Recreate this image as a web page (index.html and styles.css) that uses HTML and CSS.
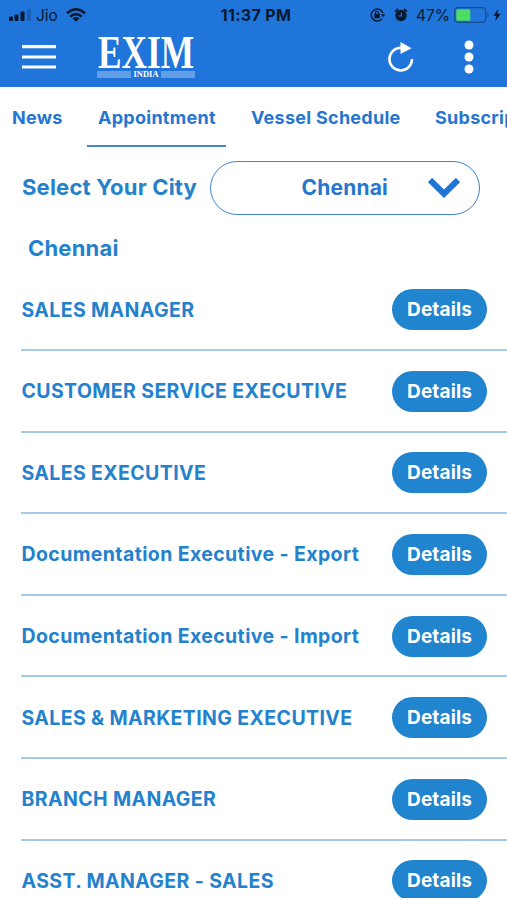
FILE: index.html
```html
<!DOCTYPE html>
<html lang="en">
<head>
<meta charset="utf-8">
<title>EXIM India</title>
<link rel="stylesheet" href="styles.css">
</head>
<body>
<div class="screen">
  <header class="header">
    <div class="status">
      <div class="status-left">
        <svg class="signal" width="23" height="12" viewBox="0 0 23 12"><rect x="0" y="7.500" width="4" height="4.500" rx="1"/><rect x="5.500" y="5.500" width="4" height="6.500" rx="1"/><rect x="11.500" y="2.500" width="4" height="9.500" rx="1"/><rect x="18" y="0" width="4" height="12" rx="1" opacity=".22"/></svg>
        <span class="carrier">Jio</span>
        <svg class="wifi" width="20" height="14" viewBox="0 0 20 14"><g fill="none" stroke="#07192f" stroke-width="2.500"><path d="M1 5.200Q10-2.700 19 5.200"/><path d="M4.200 8.600Q10 3.600 15.800 8.600"/></g><path d="M6.500 10.200Q10 7.600 13.500 10.200L10 13.700Z"/></svg>
      </div>
      <span class="time">11:37 PM</span>
      <div class="status-right">
        <svg class="lock" width="16" height="14" viewBox="0 0 16 14"><path d="M12.900 5A6 6 0 1 0 12 10.600" fill="none" stroke="#07192f" stroke-width="1.400"/><path d="M10.700 6.200h4.600L13 9.200Z"/><rect x="4.300" y="6" width="5.400" height="4.200" rx=".5"/><path d="M5.400 6.500V5a1.600 1.600 0 0 1 3.200 0v1.500" fill="none" stroke="#07192f" stroke-width="1.100"/></svg>
        <svg class="alarm" width="14" height="14" viewBox="0 0 14 14"><circle cx="7" cy="7.500" r="5.700"/><path d="M1 3.600 4 1M10 1l3 2.600" stroke="#07192f" stroke-width="1.900"/><path d="M7.300 4.500V8H4.500" fill="none" stroke="#1f75da" stroke-width="1.200"/></svg>
        <span class="percent">47%</span>
        <svg class="battery" width="36" height="16" viewBox="0 0 36 16"><rect x=".7" y=".7" width="31" height="14.600" rx="3.500" fill="none" stroke="#174c8d" stroke-width="1.300"/><rect x="2.300" y="2.300" width="14" height="11.400" rx="1.500" fill="#4cdb63"/><path d="M33.500 5.500q2.500 2.500 0 5z" fill="#174c8d"/></svg>
        <svg class="bolt" width="8" height="12" viewBox="0 0 8 12"><path d="M5.300 0 .3 6.800h3L2.300 12 7.700 4.800H4.500Z"/></svg>
      </div>
    </div>
    <div class="bar">
      <svg class="menu" width="34" height="26" viewBox="0 0 34 26"><path d="M0 2.700h34M0 13h34M0 23h34" stroke="#fff" stroke-width="3.200"/></svg>
      <div class="logo">
        <svg width="98" height="34" viewBox="0 0 98 34"><text x="1" y="31.500" textLength="96" lengthAdjust="spacingAndGlyphs" class="logo-name">EXIM</text></svg>
        <div class="logo-strip"><i></i><span>INDIA</span><i></i></div>
      </div>
      <svg class="reload" width="26" height="30" viewBox="0 0 26 30"><path d="M15 5.800H12.800A11.300 11.300 0 1 0 24 17" fill="none" stroke="#fff" stroke-width="2.500"/><path d="M12.500 0 23.500 6.300 12.500 12Z" fill="#fff"/></svg>
      <svg class="more" width="10" height="34" viewBox="0 0 10 34"><g fill="#fff"><circle cx="5" cy="5" r="4.500"/><circle cx="5" cy="17" r="4.500"/><circle cx="5" cy="29" r="4.500"/></g></svg>
    </div>
  </header>
  <nav class="tabs">
    <a class="tab news">News</a>
    <a class="tab appointment active">Appointment</a>
    <a class="tab vessel">Vessel Schedule</a>
    <a class="tab">Subscription</a>
  </nav>
  <div class="filter">
    <span class="filter-label">Select Your City</span>
    <div class="select"><span>Chennai</span><svg class="chevron" width="32" height="20" viewBox="0 0 32 20"><path d="M2 2 16 15.700 30 2" fill="none" stroke="#1f75d6" stroke-width="6"/></svg></div>
  </div>
  <h2 class="city">Chennai</h2>
  <ul class="jobs">
    <li><span>SALES MANAGER</span><button>Details</button></li>
    <li><span>CUSTOMER SERVICE EXECUTIVE</span><button>Details</button></li>
    <li><span>SALES EXECUTIVE</span><button>Details</button></li>
    <li><span>Documentation Executive - Export</span><button>Details</button></li>
    <li><span>Documentation Executive - Import</span><button>Details</button></li>
    <li><span>SALES &amp; MARKETING EXECUTIVE</span><button>Details</button></li>
    <li><span>BRANCH MANAGER</span><button>Details</button></li>
    <li><span>ASST. MANAGER - SALES</span><button>Details</button></li>
  </ul>
</div>
</body>
</html>
```
FILE: styles.css
```css
* { box-sizing: border-box; }
body { margin: 0; height: 900px; overflow: hidden; background: #fff; font-family: Inter, "Liberation Sans", sans-serif; font-weight: 660; color: #2482cd; }
svg { display: block; flex: none; }
.screen { width: 507px; height: 898px; overflow: hidden; }
.header { height: 87px; background: #1f75da; color: #07192f; }
.status { height: 30px; display: grid; grid-template-columns: 1fr auto 1fr; align-items: center; padding: 0 6px 0 9px; fill: #07192f; }
.status-left, .status-right { display: flex; align-items: center; }
.status-right { justify-content: flex-end; }
.carrier { font-size: 15.5px; font-weight: 400; margin: 0 8px 0 4px; }
.time { font-size: 16px; letter-spacing: .35px; padding-left: 2px; }
.alarm { margin: 0 8px; }
.percent { font-size: 15.5px; font-weight: 400; margin-right: 5px; }
.battery { margin-left: -1px; }
.bolt { margin-left: 3px; }
.bar { height: 57px; display: flex; align-items: center; padding: 0 33px 3px 22px; }
.logo { width: 98px; margin-left: 41px; margin-right: auto; }
.logo svg { overflow: visible; }
.logo-name { font: bold 46px "Liberation Serif", serif; fill: #fff; }
.logo-strip { display: flex; align-items: center; gap: 2px; height: 7px; margin-top: 1px; }
.logo-strip i { flex: 1; height: 7px; background: #639fe6; }
.logo-strip span { font: bold 8.5px/7px "Liberation Serif", serif; color: #fff; }
.reload { margin-right: 50px; }
.tabs { height: 60px; display: flex; padding-left: 1px; gap: 14px; color: #2676cf; font-size: 18px; letter-spacing: .27px; white-space: nowrap; overflow: hidden; }
.tab { height: 60px; line-height: 61px; padding: 0 11px; flex: none; }
.news { width: 72px; }
.appointment { width: 139px; }
.vessel { width: 170px; }
.active { border-bottom: 2px solid #4786ce; }
.filter { display: flex; align-items: center; margin-top: 14px; height: 54px; padding: 0 27px 0 22px; justify-content: space-between; }
.filter-label { font-size: 22px; letter-spacing: .2px; white-space: nowrap; line-height: 28px; padding-bottom: 2px; }
.select { width: 270px; height: 54px; border: 1.5px solid #3f82cf; border-radius: 27px; display: flex; align-items: center; justify-content: flex-end; padding-right: 19px; font-size: 21px; letter-spacing: .2px; color: #2676cf; }
.select span { padding-bottom: 1px; }
.chevron { margin-left: 40px; }
.city { margin: 19px 0 0 28px; font-size: 22px; letter-spacing: .2px; line-height: 28px; font-weight: 660; }
.jobs { list-style: none; margin: 7.4px 0 0; padding: 0 0 0 21px; }
.jobs li { height: 81.6px; border-bottom: 2px solid #a5cae8; display: flex; align-items: center; justify-content: space-between; padding: 1px 20px 0 .5px; font-size: 19.5px; letter-spacing: .38px; white-space: nowrap; }
.jobs button { width: 95px; height: 41px; border: 0; border-radius: 21px; padding: 0; background: #2084cf; color: #fff; font: 660 19px Inter, sans-serif; letter-spacing: .1px; }
```
